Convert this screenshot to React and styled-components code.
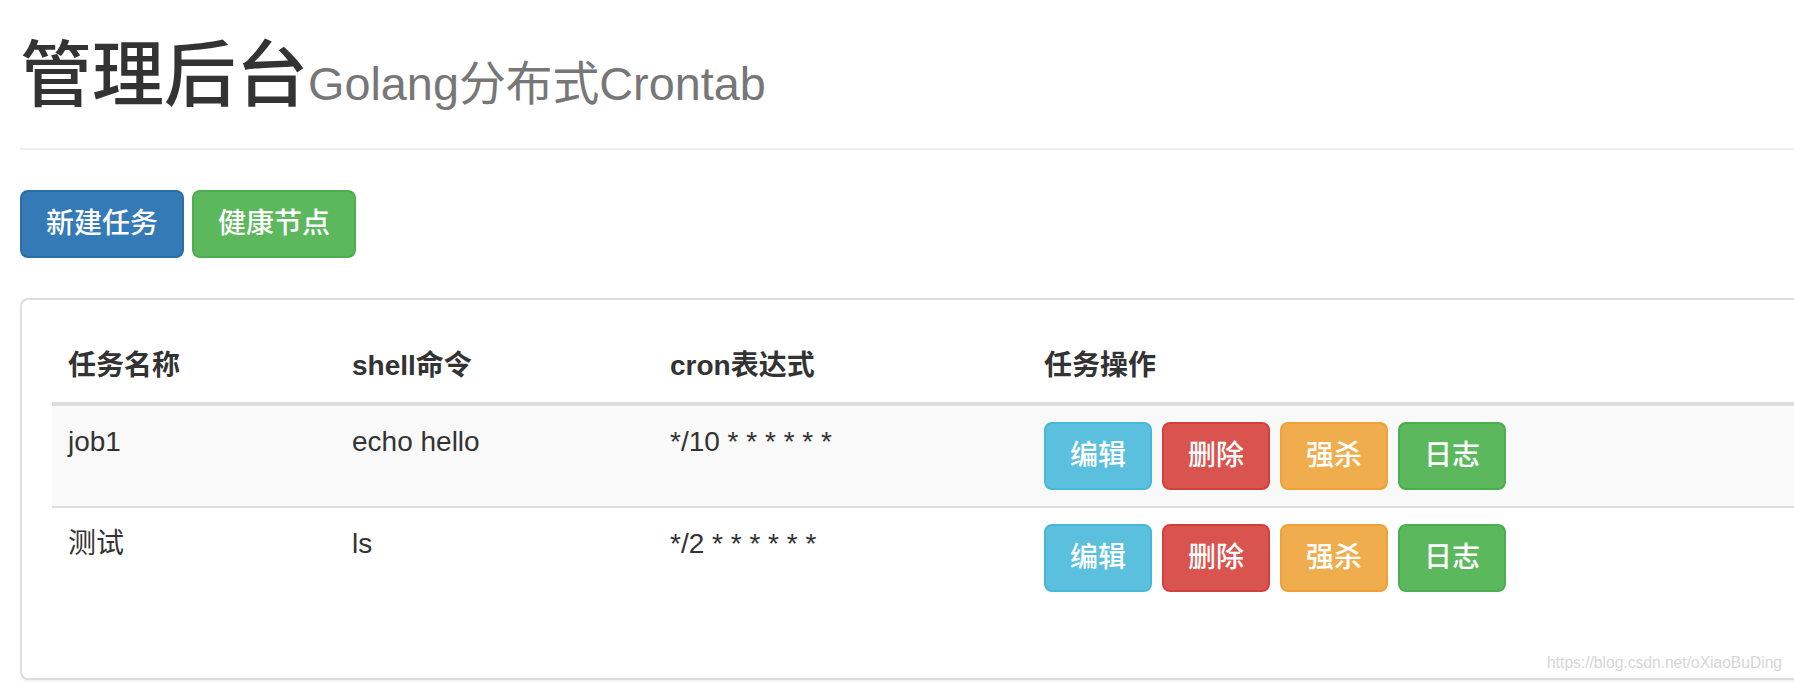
import React from "react";
import styled, { createGlobalStyle } from "styled-components";

const Global = createGlobalStyle`
  html, body {
    margin: 0;
    padding: 0;
    background: #fff;
    overflow: hidden;
  }
  body {
    font-family: "Liberation Sans", "Noto Sans CJK SC", sans-serif;
    font-size: 28px;
    line-height: 40px;
    color: #333;
  }
  #root {
    overflow: hidden;
    position: relative;
    min-height: 682px;
  }
`;

const Page = styled.div`
  padding-left: 20px;
  margin-right: -80px;
`;

const PageHeader = styled.div`
  padding-bottom: 18px;
  margin: 0 0 40px;
  border-bottom: 2px solid #eee;
`;

const Title = styled.h1`
  margin: 36px 0 15px;
  font-size: 72px;
  line-height: 79.2px;
  font-weight: 500;
  color: #333;
`;

const Sub = styled.small`
  font-size: 46.8px;
  font-weight: 400;
  color: #777;
  line-height: 1;
`;

const Toolbar = styled.div`
  display: flex;
  gap: 8px;
  margin-bottom: 40px;
`;

const palette = {
  primary: ["#337ab7", "#2e6da4"],
  success: ["#5cb85c", "#4cae4c"],
  info: ["#5bc0de", "#46b8da"],
  danger: ["#d9534f", "#d43f3a"],
  warning: ["#f0ad4e", "#eea236"],
};

const Button = styled.button`
  display: inline-block;
  box-sizing: border-box;
  height: 68px;
  padding: 12px 24px;
  font-family: "Liberation Sans", "Noto Sans CJK SC", sans-serif;
  font-size: 28px;
  line-height: 40px;
  font-weight: 500;
  color: #fff;
  background: ${(p) => palette[p.$kind][0]};
  border: 2px solid ${(p) => palette[p.$kind][1]};
  border-radius: 8px;
  white-space: nowrap;
  cursor: pointer;
`;

const Panel = styled.div`
  border: 2px solid #ddd;
  border-radius: 8px;
  box-shadow: 0 2px 2px rgba(0, 0, 0, 0.05);
  padding: 30px;
  background: #fff;
`;

const Table = styled.table`
  width: 100%;
  border-collapse: collapse;
  border-spacing: 0;
  margin-bottom: 40px;
`;

const Th = styled.th`
  text-align: left;
  vertical-align: bottom;
  padding: 16px;
  font-weight: 700;
  border-bottom: 4px solid #ddd;
  width: ${(p) => (p.$w ? `${p.$w}px` : "auto")};
  box-sizing: border-box;
`;

const Row = styled.tr`
  background: ${(p) => (p.$striped ? "#f9f9f9" : "transparent")};
`;

const Td = styled.td`
  vertical-align: top;
  padding: 16px;
  border-top: 2px solid #ddd;
`;

const Actions = styled.div`
  display: flex;
  gap: 10px;
`;

const Watermark = styled.div`
  position: absolute;
  right: 12px;
  top: 652px;
  font-family: "Liberation Sans", sans-serif;
  font-size: 15.6px;
  line-height: 22px;
  color: #d6d6d6;
  text-shadow: 0 0 1px #fff;
  pointer-events: none;
`;

const jobs = [
  { name: "job1", command: "echo hello", expr: "*/10 * * * * * *" },
  { name: "测试", command: "ls", expr: "*/2 * * * * * *" },
];

export default function App() {
  return (
    <>
      <Global />
      <Page>
        <PageHeader>
          <Title>
            管理后台<Sub>Golang分布式Crontab</Sub>
          </Title>
        </PageHeader>
        <Toolbar>
          <Button $kind="primary">新建任务</Button>
          <Button $kind="success">健康节点</Button>
        </Toolbar>
        <Panel>
          <Table>
            <thead>
              <tr>
                <Th $w={284}>任务名称</Th>
                <Th $w={318}>shell命令</Th>
                <Th $w={374}>cron表达式</Th>
                <Th>任务操作</Th>
              </tr>
            </thead>
            <tbody>
              {jobs.map((job, i) => (
                <Row key={job.name} $striped={i % 2 === 0}>
                  <Td>{job.name}</Td>
                  <Td>{job.command}</Td>
                  <Td>{job.expr}</Td>
                  <Td>
                    <Actions>
                      <Button $kind="info">编辑</Button>
                      <Button $kind="danger">删除</Button>
                      <Button $kind="warning">强杀</Button>
                      <Button $kind="success">日志</Button>
                    </Actions>
                  </Td>
                </Row>
              ))}
            </tbody>
          </Table>
        </Panel>
      </Page>
      <Watermark>https://blog.csdn.net/oXiaoBuDing</Watermark>
    </>
  );
}
